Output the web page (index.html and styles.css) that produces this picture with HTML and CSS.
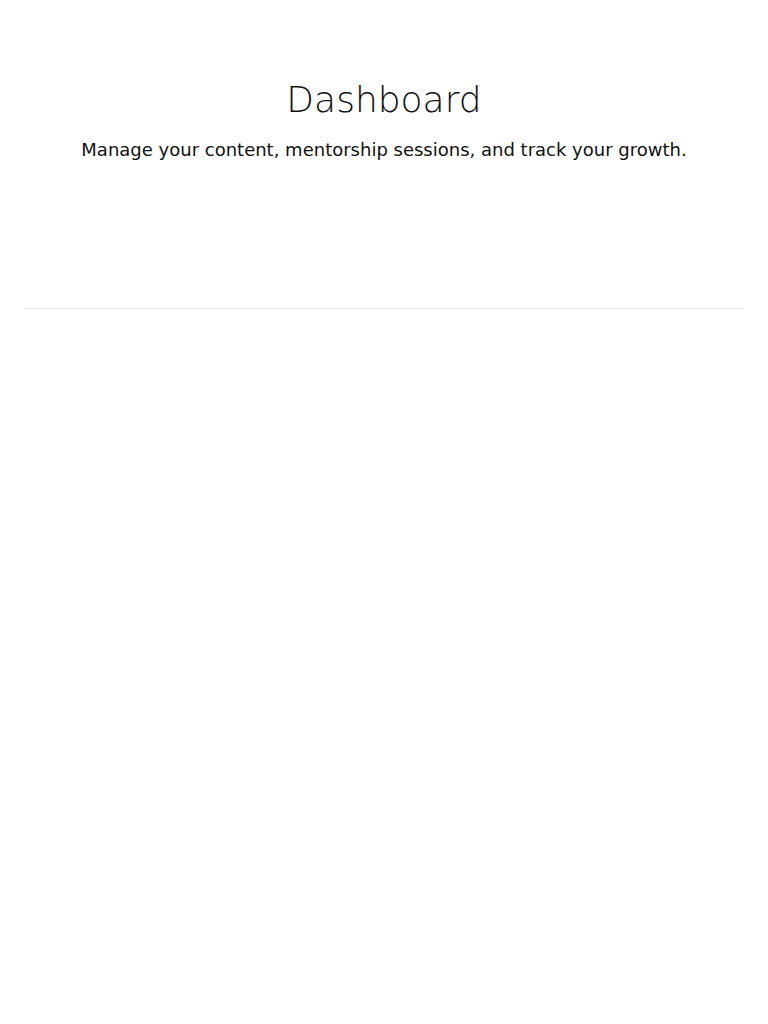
FILE: index.html
```html
<!DOCTYPE html>
<html>
<head>
<meta charset="utf-8">
<link rel="stylesheet" href="styles.css">
</head>
<body>
<div class="page">
  <header class="hero">
    <h1 class="title">Dashboard</h1>
    <p class="subtitle">Manage your content, mentorship sessions, and track your growth.</p>
  </header>
  <hr class="divider">
</div>
</body>
</html>
```
FILE: styles.css
```css
html, body {
  margin: 0;
  padding: 0;
  background: #ffffff;
}
body {
  font-family: "DejaVu Sans", sans-serif;
  color: #111111;
}
.page {
  padding: 0 24px;
}
.hero {
  padding-top: 78px;
  height: 308px;
  box-sizing: border-box;
  text-align: center;
}
.title {
  margin: 0;
  font-size: 36px;
  font-weight: 200;
  line-height: 44px;
  letter-spacing: 0;
}
.subtitle {
  margin: 14px 0 0;
  font-size: 18px;
  line-height: 28px;
  color: #111111;
}
.divider {
  margin: 0;
  border: 0;
  border-top: 1px solid #e5e5e5;
}
```
